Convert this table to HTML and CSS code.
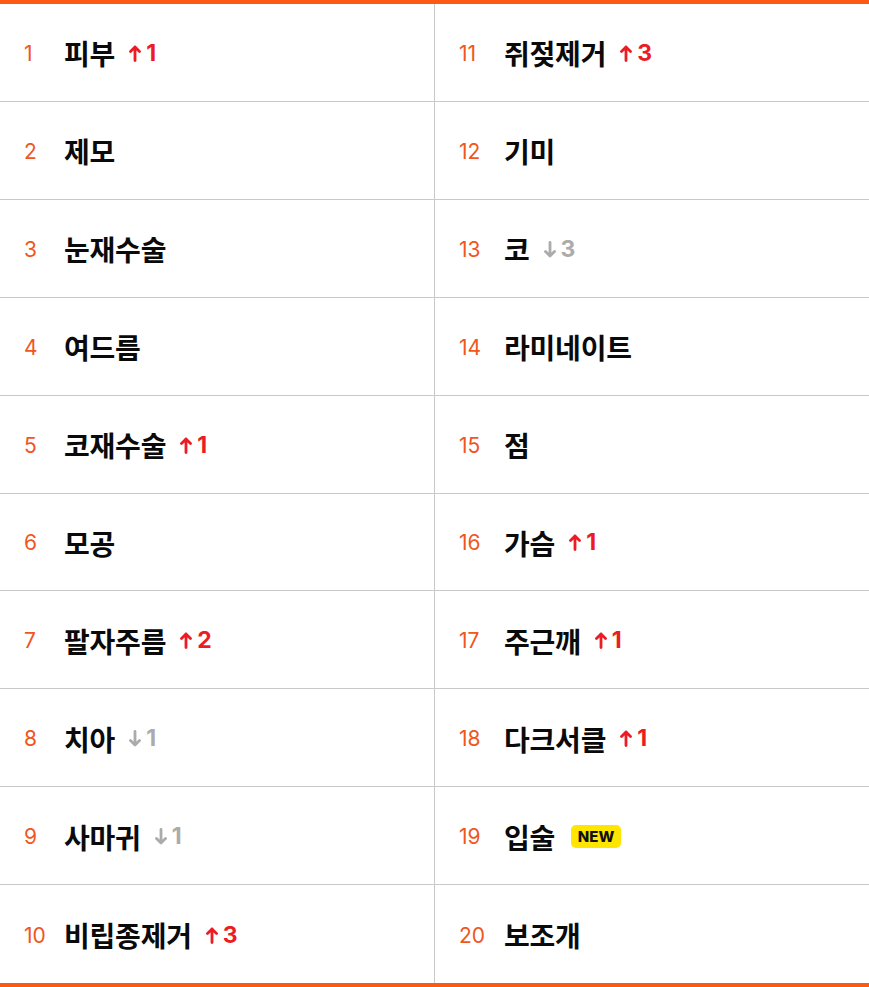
FILE: index.html
```html
<!DOCTYPE html>
<html lang="ko">
<head>
<meta charset="utf-8">
<link rel="stylesheet" href="styles.css">
<title>인기 검색어</title>
</head>
<body>
<div class="ranking">
  <div class="cell"><span class="rank">1</span><span class="name">피부</span><span class="change up"><svg class="arrow" viewBox="0 0 12 17"><path d="M6 15.5V2M1.5 6.5L6 2l4.5 4.5"/></svg>1</span></div>
  <div class="cell"><span class="rank">2</span><span class="name">제모</span></div>
  <div class="cell"><span class="rank">3</span><span class="name">눈재수술</span></div>
  <div class="cell"><span class="rank">4</span><span class="name">여드름</span></div>
  <div class="cell"><span class="rank">5</span><span class="name">코재수술</span><span class="change up"><svg class="arrow" viewBox="0 0 12 17"><path d="M6 15.5V2M1.5 6.5L6 2l4.5 4.5"/></svg>1</span></div>
  <div class="cell"><span class="rank">6</span><span class="name">모공</span></div>
  <div class="cell"><span class="rank">7</span><span class="name">팔자주름</span><span class="change up"><svg class="arrow" viewBox="0 0 12 17"><path d="M6 15.5V2M1.5 6.5L6 2l4.5 4.5"/></svg>2</span></div>
  <div class="cell"><span class="rank">8</span><span class="name">치아</span><span class="change down"><svg class="arrow" viewBox="0 0 12 17"><path d="M6 1.5V15M1.5 10.5L6 15l4.5-4.5"/></svg>1</span></div>
  <div class="cell"><span class="rank">9</span><span class="name">사마귀</span><span class="change down"><svg class="arrow" viewBox="0 0 12 17"><path d="M6 1.5V15M1.5 10.5L6 15l4.5-4.5"/></svg>1</span></div>
  <div class="cell last"><span class="rank">10</span><span class="name">비립종제거</span><span class="change up"><svg class="arrow" viewBox="0 0 12 17"><path d="M6 15.5V2M1.5 6.5L6 2l4.5 4.5"/></svg>3</span></div>
  <div class="cell right"><span class="rank">11</span><span class="name">쥐젖제거</span><span class="change up"><svg class="arrow" viewBox="0 0 12 17"><path d="M6 15.5V2M1.5 6.5L6 2l4.5 4.5"/></svg>3</span></div>
  <div class="cell right"><span class="rank">12</span><span class="name">기미</span></div>
  <div class="cell right"><span class="rank">13</span><span class="name">코</span><span class="change down"><svg class="arrow" viewBox="0 0 12 17"><path d="M6 1.5V15M1.5 10.5L6 15l4.5-4.5"/></svg>3</span></div>
  <div class="cell right"><span class="rank">14</span><span class="name">라미네이트</span></div>
  <div class="cell right"><span class="rank">15</span><span class="name">점</span></div>
  <div class="cell right"><span class="rank">16</span><span class="name">가슴</span><span class="change up"><svg class="arrow" viewBox="0 0 12 17"><path d="M6 15.5V2M1.5 6.5L6 2l4.5 4.5"/></svg>1</span></div>
  <div class="cell right"><span class="rank">17</span><span class="name">주근깨</span><span class="change up"><svg class="arrow" viewBox="0 0 12 17"><path d="M6 15.5V2M1.5 6.5L6 2l4.5 4.5"/></svg>1</span></div>
  <div class="cell right"><span class="rank">18</span><span class="name">다크서클</span><span class="change up"><svg class="arrow" viewBox="0 0 12 17"><path d="M6 15.5V2M1.5 6.5L6 2l4.5 4.5"/></svg>1</span></div>
  <div class="cell right"><span class="rank">19</span><span class="name">입술</span><span class="badge">NEW</span></div>
  <div class="cell right last"><span class="rank">20</span><span class="name">보조개</span></div>
</div>
</body>
</html>
```
FILE: styles.css
```css
* { box-sizing: border-box; }
html, body { margin: 0; padding: 0; background: #fff; }
body {
  font-family: "Noto Sans CJK KR", "Noto Sans", sans-serif;
}
.ranking {
  height: 987px;
  border-top: 4px solid #fc5a14;
  border-bottom: 4px solid #fc5a14;
  display: grid;
  grid-template-columns: 434px 1fr;
  grid-template-rows: repeat(10, 1fr);
  grid-auto-flow: column;
}
.cell {
  display: flex;
  align-items: center;
  padding-left: 24px;
  padding-top: 2px;
  border-bottom: 1px solid #c9c9c9;
  min-height: 0;
}
.cell.last { border-bottom: none; }
.cell.right { border-left: 1px solid #c9c9c9; }
.rank {
  flex: none;
  width: 22px;
  margin-right: 18px;
  font-family: "Inter", "Noto Sans", sans-serif;
  font-size: 21px;
  font-weight: 400;
  color: #f0561e;
  line-height: 1;
}
.cell.right .rank { width: 26px; margin-right: 19px; }
.name {
  font-size: 28px;
  font-weight: 700;
  color: #0a0a0a;
  line-height: 1;
  letter-spacing: -0.2px;
}
.change {
  display: inline-flex;
  align-items: center;
  margin-left: 14px;
  font-family: "Inter", "Noto Sans", sans-serif;
  font-size: 23px;
  font-weight: 700;
  line-height: 1;
}
.change.up { color: #ec1c24; }
.change.down { color: #ababab; }
.arrow {
  width: 12px;
  height: 17px;
  margin-right: 5px;
  fill: none;
  stroke: currentColor;
  stroke-width: 2.8;
  stroke-linecap: round;
  stroke-linejoin: round;
}
.badge {
  margin-left: 16px;
  background: #ffe500;
  border-radius: 5px;
  width: 50px;
  height: 23px;
  display: inline-flex;
  align-items: center;
  justify-content: center;
  font-family: "Inter", "Noto Sans", sans-serif;
  font-size: 15px;
  font-weight: 800;
  color: #111;
}
```
